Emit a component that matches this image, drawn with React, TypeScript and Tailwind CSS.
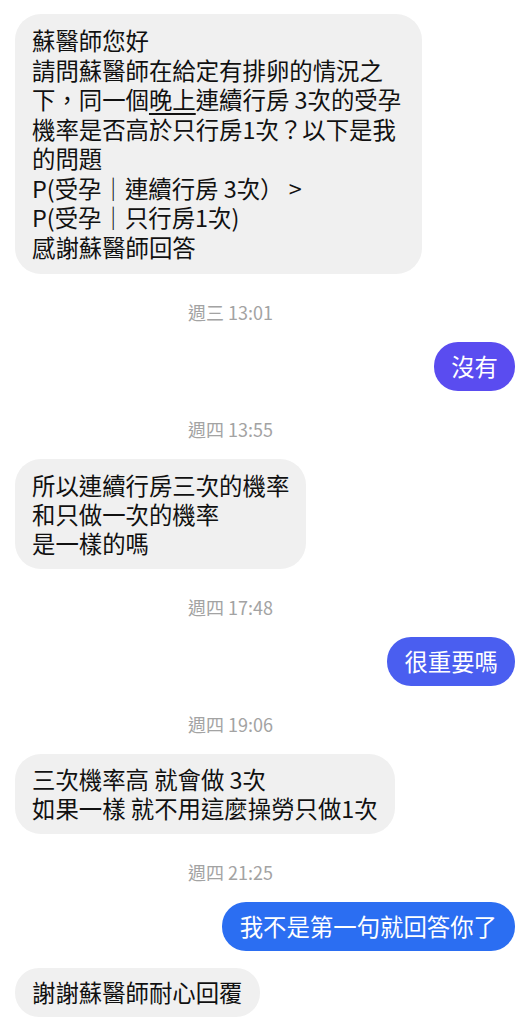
import React from "react";

const font = { fontFamily: "'Noto Sans CJK TC', 'Noto Sans', sans-serif" };

function Stamp({ children }: { children: React.ReactNode }) {
  return (
    <div className="mt-[26px] mb-[18px] h-[24px] pl-[188px] text-[18px] leading-[24px] text-[#a3a3a3]">
      {children}
    </div>
  );
}

export default function App() {
  return (
    <div className="min-h-[1024px] w-[526px] bg-white pt-[14px] text-[#111]" style={font}>
      <div className="ml-[15px] w-[407px] rounded-[26px] bg-[#f0f0f0] px-[17px] py-[12px] text-[23.4px] leading-[29.5px]">
        <div>蘇醫師您好</div>
        <div>請問蘇醫師在給定有排卵的情況之</div>
        <div>
          下，同一個<span className="underline decoration-[1.5px] underline-offset-[4px]">晚上</span>連續行房 3次的受孕
        </div>
        <div>機率是否高於只行房1次？以下是我</div>
        <div>的問題</div>
        <div>P(受孕｜連續行房 3次） &gt;</div>
        <div>P(受孕｜只行房1次)</div>
        <div>感謝蘇醫師回答</div>
      </div>

      <Stamp>週三 13:01</Stamp>

      <div className="flex justify-end pr-[11px]">
        <div className="rounded-[24px] bg-[#5a4cf0] px-[17px] py-[10px] text-[23.4px] leading-[29px] text-white">
          沒有
        </div>
      </div>

      <Stamp>週四 13:55</Stamp>

      <div className="ml-[15px] inline-block rounded-[26px] bg-[#f0f0f0] px-[17px] py-[11.5px] text-[23.4px] leading-[29px]">
        <div>所以連續行房三次的機率</div>
        <div>和只做一次的機率</div>
        <div>是一樣的嗎</div>
      </div>

      <Stamp>週四 17:48</Stamp>

      <div className="flex justify-end pr-[11px]">
        <div className="rounded-[24px] bg-[#4a5ef0] px-[17px] py-[10px] text-[23.4px] leading-[29px] text-white">
          很重要嗎
        </div>
      </div>

      <Stamp>週四 19:06</Stamp>

      <div className="ml-[15px] inline-block rounded-[26px] bg-[#f0f0f0] px-[17px] py-[11px] text-[23.4px] leading-[29px]">
        <div>三次機率高 就會做 3次</div>
        <div>如果一樣 就不用這麼操勞只做1次</div>
      </div>

      <Stamp>週四 21:25</Stamp>

      <div className="flex justify-end pr-[11px]">
        <div className="rounded-[24px] bg-[#2b6ef2] px-[18px] py-[10px] text-[23.4px] leading-[29px] text-white">
          我不是第一句就回答你了
        </div>
      </div>

      <div className="mt-[17px] ml-[15px] inline-block rounded-[24px] bg-[#f0f0f0] px-[17px] py-[10px] text-[23.4px] leading-[29px]">
        謝謝蘇醫師耐心回覆
      </div>
    </div>
  );
}
